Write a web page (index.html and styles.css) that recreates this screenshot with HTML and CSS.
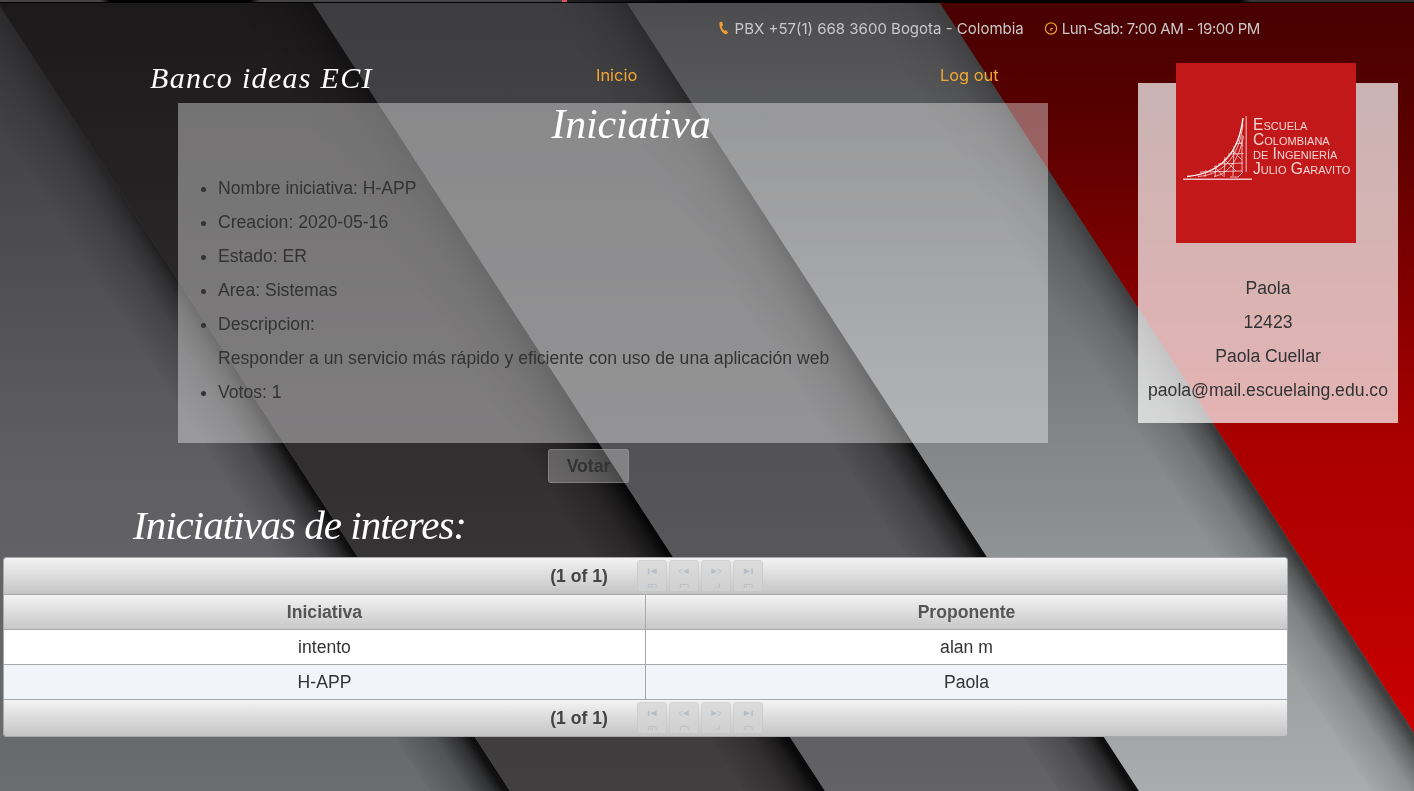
FILE: index.html
```html
<!DOCTYPE html>
<html lang="es">
<head>
  <meta charset="UTF-8" />
  <meta name="viewport" content="width=device-width, initial-scale=1.0" />
  <title>Banco ideas ECI</title>
  <link rel="stylesheet" href="styles.css">
</head>
<body>

  <!-- Background -->
  <svg class="backdrop" viewBox="0 0 1414 791" preserveAspectRatio="none" aria-hidden="true">
    <defs>
      <linearGradient id="bandLeft" gradientUnits="userSpaceOnUse" x1="0" y1="0" x2="0" y2="791">
        <stop offset="0" stop-color="#38383a" />
        <stop offset="0.57" stop-color="#5e5e61" />
        <stop offset="1" stop-color="#6b6c6f" />
      </linearGradient>
      <linearGradient id="bandOne" gradientUnits="userSpaceOnUse" x1="0" y1="0" x2="0" y2="791">
        <stop offset="0" stop-color="#1b191a" />
        <stop offset="1" stop-color="#423f41" />
      </linearGradient>
      <linearGradient id="bandTwo" gradientUnits="userSpaceOnUse" x1="0" y1="0" x2="0" y2="791">
        <stop offset="0" stop-color="#3d3d3f" />
        <stop offset="1" stop-color="#636366" />
      </linearGradient>
      <linearGradient id="bandThree" gradientUnits="userSpaceOnUse" x1="0" y1="0" x2="0" y2="791">
        <stop offset="0" stop-color="#4c4c4e" />
        <stop offset="0.57" stop-color="#848688" />
        <stop offset="1" stop-color="#a9acad" />
      </linearGradient>
      <linearGradient id="bandRed" gradientUnits="userSpaceOnUse" x1="0" y1="0" x2="0" y2="791">
        <stop offset="0" stop-color="#480000" />
        <stop offset="0.14" stop-color="#560000" />
        <stop offset="0.55" stop-color="#a80000" />
        <stop offset="1" stop-color="#d00000" />
      </linearGradient>
      <linearGradient id="shadowOne" gradientUnits="userSpaceOnUse" x1="-4" y1="0" x2="-60" y2="36">
        <stop offset="0" stop-color="#000" stop-opacity="0.85" />
        <stop offset="0.15" stop-color="#000" stop-opacity="0.55" />
        <stop offset="0.45" stop-color="#000" stop-opacity="0.22" />
        <stop offset="1" stop-color="#000" stop-opacity="0" />
      </linearGradient>
      <linearGradient id="shadowTwo" gradientUnits="userSpaceOnUse" x1="311" y1="0" x2="255" y2="36">
        <stop offset="0" stop-color="#000" stop-opacity="0.85" />
        <stop offset="0.15" stop-color="#000" stop-opacity="0.55" />
        <stop offset="0.45" stop-color="#000" stop-opacity="0.22" />
        <stop offset="1" stop-color="#000" stop-opacity="0" />
      </linearGradient>
      <linearGradient id="shadowThree" gradientUnits="userSpaceOnUse" x1="625" y1="0" x2="569" y2="36">
        <stop offset="0" stop-color="#000" stop-opacity="0.85" />
        <stop offset="0.15" stop-color="#000" stop-opacity="0.55" />
        <stop offset="0.45" stop-color="#000" stop-opacity="0.22" />
        <stop offset="1" stop-color="#000" stop-opacity="0" />
      </linearGradient>
      <linearGradient id="shadowFour" gradientUnits="userSpaceOnUse" x1="938" y1="0" x2="882" y2="36">
        <stop offset="0" stop-color="#000" stop-opacity="0.6" />
        <stop offset="0.15" stop-color="#000" stop-opacity="0.4" />
        <stop offset="0.45" stop-color="#000" stop-opacity="0.15" />
        <stop offset="1" stop-color="#000" stop-opacity="0" />
      </linearGradient>
      <linearGradient id="fadeDown" gradientUnits="userSpaceOnUse" x1="0" y1="0" x2="0" y2="791">
        <stop offset="0" stop-color="#fff" stop-opacity="0.3" />
        <stop offset="0.6" stop-color="#fff" stop-opacity="1" />
      </linearGradient>
      <mask id="shadowFade" maskUnits="userSpaceOnUse" x="-100" y="0" width="1600" height="791">
        <rect x="-100" y="0" width="1600" height="791" fill="url(#fadeDown)" />
      </mask>
    </defs>
    <rect width="1414" height="791" fill="url(#bandLeft)" />
    <polygon points="-84,0 -4,0 510,791 430,791" fill="url(#shadowOne)" mask="url(#shadowFade)" />
    <polygon points="-4,0 311,0 825,791 510,791" fill="url(#bandOne)" />
    <polygon points="231,0 311,0 825,791 745,791" fill="url(#shadowTwo)" mask="url(#shadowFade)" />
    <polygon points="311,0 625,0 1139,791 825,791" fill="url(#bandTwo)" />
    <polygon points="545,0 625,0 1139,791 1059,791" fill="url(#shadowThree)" mask="url(#shadowFade)" />
    <polygon points="625,0 938,0 1452,791 1139,791" fill="url(#bandThree)" />
    <polygon points="858,0 938,0 1452,791 1372,791" fill="url(#shadowFour)" mask="url(#shadowFade)" />
    <polygon points="938,0 1500,0 1500,791 1452,791" fill="url(#bandRed)" />
  </svg>

  <!-- Icons for the pager -->
  <svg class="sprites" aria-hidden="true">
    <symbol id="pageFirst" viewBox="0 0 30 32">
      <path d="M10.500 8h1.600v6h-1.600zM20 8v6l-7-3z" />
      <path class="broken" d="M11 29v-3q0-1 1-1h6q1 0 1.500 1.500v1.500M13.500 26.500v2M15.500 26.500v2" />
    </symbol>
    <symbol id="pagePrev" viewBox="0 0 30 32">
      <path d="M20 8v6l-6-3z" />
      <path class="broken" d="M13.500 8.500 9.500 11l4 2.500M11 29v-3q0-1 1-1h6q1 0 1.500 1.500v1.500" />
    </symbol>
    <symbol id="pageNext" viewBox="0 0 30 32">
      <path d="M10 8v6l6-3z" />
      <path class="broken" d="M16.500 8.500 20.500 11l-4 2.500M13 29h1M16 26.500v2.500M18.500 24v5" />
    </symbol>
    <symbol id="pageLast" viewBox="0 0 30 32">
      <path d="M18.500 8h1.600v6h-1.600zM10.500 8v6l7-3z" />
      <path class="broken" d="M11 29v-3q0-1 1-1h6q1 0 1.500 1.500v1.500M13.500 26.500v2" />
    </symbol>
  </svg>

  <div class="top-strip"></div>

  <div class="contact">
    <span class="contact-item">
      <svg class="contact-icon" viewBox="0 0 14 14"><path d="M2.500 1.200 5 .8l1.200 3.400-1.500 1c.3 1.800 1.300 3.400 2.700 4.500l1.500-.8 2.300 2.700-1.800 1.700C5.800 13.200 1.800 7.200 2.500 1.200z" /></svg>
      PBX +57(1) 668 3600 Bogota - Colombia
    </span>
    <span class="contact-item contact-hours">
      <svg class="contact-icon" viewBox="0 0 14 14"><circle class="ring" cx="7" cy="7.500" r="5.600" /><path class="ring" d="M7 10V7.500h2" /></svg>
      Lun-Sab: 7:00 AM - 19:00 PM
    </span>
  </div>

  <div class="menu">
    <div class="brand">Banco ideas ECI</div>
    <a class="menu-link" href="#">Inicio</a>
    <a class="menu-link" href="#">Log out</a>
  </div>

  <div class="main">
    <div class="panel">
      <h1 class="panel-title">Iniciativa</h1>
      <ul class="facts">
        <li>Nombre iniciativa: H-APP</li>
        <li>Creacion: 2020-05-16</li>
        <li>Estado: ER</li>
        <li>Area: Sistemas</li>
        <li>Descripcion:<br>Responder a un servicio más rápido y eficiente con uso de una aplicación web</li>
        <li>Votos: 1</li>
      </ul>
    </div>

    <div class="side">
      <div class="logo">
        <svg class="logo-mark" viewBox="0 0 76 75">
          <rect class="logo-rule" x="67.500" y="6" width="1.500" height="56" />
          <rect class="logo-base" x="5" y="68.500" width="69" height="1.500" />
          <path class="logo-curve" d="M9 66.500C36 64 60 50 65 8" />
          <path class="logo-net" d="M20 66.500C42 65 61 50 65 14M36 66.500C50 64 61 50 65.500 26M57 34l8-1M50 44l15.500-.500M40 54l25-1M22 62l42-1M64 25v37M56 36l-1 30M47 47l-1 20M38 55l-1 12M28 60l-1 7M65 62l-5 5h-8M60 30l5 6M54 40l10 10M46 49l12 12M36 56l9 10" />
        </svg>
        <div class="logo-text">Escuela<br>Colombiana<br>de Ingeniería<br>Julio Garavito</div>
      </div>
      <div class="person">
        <div>Paola</div>
        <div>12423</div>
        <div>Paola Cuellar</div>
        <div>paola@mail.escuelaing.edu.co</div>
      </div>
    </div>
  </div>

  <div class="vote-row">
    <button class="vote-button">Votar</button>
  </div>

  <h2 class="sub-title">Iniciativas de interes:</h2>

  <div class="datatable">
    <div class="pager pager-top">
      <span class="pager-count">(1 of 1)</span>
      <span class="pager-button"><svg viewBox="0 0 30 32"><use href="#pageFirst" /></svg></span>
      <span class="pager-button"><svg viewBox="0 0 30 32"><use href="#pagePrev" /></svg></span>
      <span class="pager-button"><svg viewBox="0 0 30 32"><use href="#pageNext" /></svg></span>
      <span class="pager-button"><svg viewBox="0 0 30 32"><use href="#pageLast" /></svg></span>
    </div>
    <table class="rows">
      <thead>
        <tr><th class="first-col">Iniciativa</th><th>Proponente</th></tr>
      </thead>
      <tbody>
        <tr><td>intento</td><td>alan m</td></tr>
        <tr class="even"><td>H-APP</td><td>Paola</td></tr>
      </tbody>
    </table>
    <div class="pager">
      <span class="pager-count">(1 of 1)</span>
      <span class="pager-button"><svg viewBox="0 0 30 32"><use href="#pageFirst" /></svg></span>
      <span class="pager-button"><svg viewBox="0 0 30 32"><use href="#pagePrev" /></svg></span>
      <span class="pager-button"><svg viewBox="0 0 30 32"><use href="#pageNext" /></svg></span>
      <span class="pager-button"><svg viewBox="0 0 30 32"><use href="#pageLast" /></svg></span>
    </div>
  </div>

</body>
</html>
```

FILE: styles.css
```css
* {
  box-sizing: border-box;
}

html, body {
  margin: 0;
  padding: 0;
  height: 100%;
  overflow: hidden;
  font-family: "Liberation Sans", Arial, sans-serif;
  font-size: 17.6px;
  color: #333;
}

.backdrop {
  position: fixed;
  top: 0;
  left: 0;
  width: 100%;
  height: 100%;
  z-index: -1;
}

.sprites {
  position: absolute;
  width: 0;
  height: 0;
}

.top-strip {
  height: 3px;
  border-bottom: 1px solid #000;
  background: linear-gradient(to right, #444 0, #444 100px, #000 110px, #000 250px, #444 260px, #444 562px, #e0506a 562px, #e0506a 567px, #222 567px, #000 700px, #000 1240px, #333 1250px);
}

.contact {
  height: 50px;
  padding-right: 154px;
  display: flex;
  justify-content: flex-end;
  align-items: center;
  gap: 20px;
}

.contact-item {
  display: flex;
  align-items: center;
  gap: 4px;
  font-family: Inter, "Open Sans", sans-serif;
  font-size: 15px;
  letter-spacing: 0;
  color: #c9c9c9;
}

.contact-hours {
  letter-spacing: -0.42px;
}

.contact-icon {
  width: 14px;
  height: 14px;
  fill: #f0a030;
}

.contact-icon .ring {
  fill: none;
  stroke: #f0a030;
  stroke-width: 1.2;
}

.menu {
  height: 50px;
  padding-left: 150px;
  display: grid;
  grid-template-columns: 446px 344px auto;
}

.brand {
  font-family: "Liberation Serif", serif;
  font-style: italic;
  font-size: 30px;
  line-height: 50px;
  letter-spacing: 1.3px;
  color: #fff;
  white-space: nowrap;
}

.menu-link {
  font-family: Inter, "Open Sans", sans-serif;
  font-size: 16.4px;
  line-height: 44px;
  color: #f5a733;
  text-decoration: none;
}

.main {
  display: flex;
  padding-left: 178px;
}

.panel {
  width: 870px;
  height: 340px;
  background: rgba(255, 255, 255, 0.38);
}

.panel-title {
  margin: 0 0 26px;
  padding-left: 36px;
  font-family: "Liberation Serif", serif;
  font-style: italic;
  font-weight: normal;
  font-size: 42px;
  line-height: 42px;
  letter-spacing: -0.2px;
  text-align: center;
  color: #fff;
}

.facts {
  margin: 0;
  padding-left: 40px;
  line-height: 34px;
}

.side {
  width: 260px;
  height: 340px;
  margin-left: 90px;
  margin-top: -20px;
  background: rgba(255, 255, 255, 0.7);
}

.logo {
  width: 180px;
  height: 180px;
  margin-top: -20px;
  margin-left: 38px;
  padding: 47px 0 0 2px;
  display: flex;
  background: #c2181a;
}

.logo-mark {
  width: 76px;
  height: 75px;
  flex: none;
}

.logo-rule {
  fill: #e38c8c;
}

.logo-base {
  fill: #f0c4c4;
}

.logo-curve {
  fill: none;
  stroke: #fff;
  stroke-width: 1.4;
}

.logo-net {
  fill: none;
  stroke: #f6dada;
  stroke-width: 0.8;
}

.logo-text {
  margin-left: -1px;
  padding-top: 8px;
  font-size: 15.6px;
  line-height: 14.5px;
  font-variant: small-caps;
  color: #f4d6d6;
  white-space: nowrap;
}

.person {
  margin-top: 28px;
  text-align: center;
  line-height: 34px;
}

.vote-row {
  padding: 6px 0 0 548px;
}

.vote-button {
  display: block;
  width: 81px;
  height: 34px;
  padding: 0;
  font-family: "Liberation Sans", Arial, sans-serif;
  font-size: 17.6px;
  font-weight: bold;
  color: #333;
  background: rgba(255, 255, 255, 0.27);
  border: 1px solid rgba(160, 160, 160, 0.45);
  border-radius: 3px;
}

.sub-title {
  margin: 10px 0 0;
  padding-left: 133px;
  font-family: "Liberation Serif", serif;
  font-style: italic;
  font-weight: normal;
  font-size: 41px;
  line-height: 64px;
  letter-spacing: -1px;
  color: #fff;
}

.datatable {
  width: 1285px;
  margin-left: 3px;
  border: 1px solid #a8a8a8;
  border-radius: 3px;
  overflow: hidden;
}

.pager {
  height: 36px;
  padding-left: 22px;
  display: flex;
  justify-content: center;
  align-items: center;
  gap: 2px;
  background: linear-gradient(to bottom, #f3f3f3, #c4c4c4);
}

.pager-top {
  height: 37px;
  border-bottom: 1px solid #a8a8a8;
}

.pager-count {
  margin-right: 27px;
  font-weight: bold;
  color: #444;
}

.pager-button {
  width: 30px;
  height: 32px;
  border: 1px solid #c6c6c6;
  border-radius: 3px;
  background: #d4d4d4;
  opacity: 0.7;
}

.pager-button svg {
  display: block;
  width: 28px;
  height: 30px;
  fill: #a4b0ba;
}

.broken {
  fill: none;
  stroke: #a4b0ba;
  stroke-width: 0.9;
}

.rows {
  width: 100%;
  table-layout: fixed;
  border-collapse: separate;
  border-spacing: 0;
}

.first-col {
  width: 641px;
}

.rows th, .rows td {
  height: 35px;
  padding: 0;
  text-align: center;
  border-bottom: 1px solid #a8a8a8;
}

.rows th + th, .rows td + td {
  border-left: 1px solid #a8a8a8;
}

.rows th {
  font-weight: bold;
  color: #555;
  background: linear-gradient(to bottom, #f3f3f3, #c8c8c8);
}

.rows td {
  background: #fff;
}

.rows .even td {
  background: #f1f4f9;
}
```
